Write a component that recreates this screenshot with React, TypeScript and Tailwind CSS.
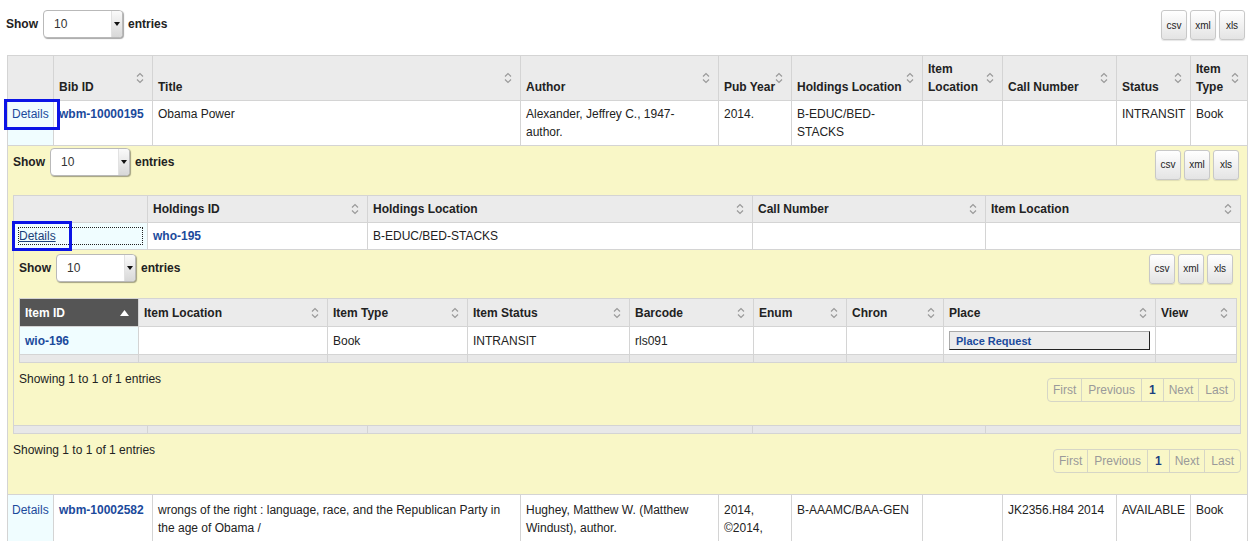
import React from "react";

const font = { fontFamily: '"Liberation Sans", Arial, Helvetica, sans-serif' };

function SortIcon() {
  return (
    <svg
      width="8"
      height="12"
      viewBox="0 0 8 12"
      className="absolute right-[8px] top-1/2 -translate-y-1/2"
      fill="none"
      stroke="#9a9a9a"
      strokeWidth="1.2"
    >
      <path d="M1 4.5 L4 1.5 L7 4.5" />
      <path d="M1 7.5 L4 10.5 L7 7.5" />
    </svg>
  );
}

function ShowSelect() {
  return (
    <div className="flex items-center gap-[5px] text-[12px] font-bold text-[#222]">
      <span>Show</span>
      <div className="flex h-[28px] w-[80px] overflow-hidden rounded-[4px] border border-[#b9b9b9] bg-white shadow-[1px_1px_1px_rgba(0,0,0,0.35)]">
        <span className="flex flex-1 items-center pl-[10px] font-normal text-[#333]">10</span>
        <span className="flex w-[11px] items-center justify-center border-l border-[#e2e2e2] bg-gradient-to-b from-[#fafafa] to-[#d8d8d8]">
          <svg width="6" height="4" viewBox="0 0 6 4">
            <path d="M0 0 L6 0 L3 4 Z" fill="#111" />
          </svg>
        </span>
      </div>
      <span>entries</span>
    </div>
  );
}

function ExportButtons() {
  return (
    <div className="flex gap-[3px]">
      {["csv", "xml", "xls"].map((b) => (
        <div
          key={b}
          className="flex h-[30px] w-[26px] items-center justify-center rounded-[3px] border border-[#c8c8c8] bg-gradient-to-b from-white to-[#e4e4e4] text-[10px] text-[#222] shadow-[0_1px_1px_rgba(0,0,0,0.1)]"
        >
          {b}
        </div>
      ))}
    </div>
  );
}

function Pager() {
  return (
    <div className="flex h-[24px] overflow-hidden rounded-[4px] border border-[#d6d6c6] text-[12px] text-[#9a9a9a]">
      <span className="flex items-center px-[5px]">First</span>
      <span className="flex items-center border-l border-[#d6d6c6] px-[6px]">Previous</span>
      <span className="flex items-center border-l border-[#d6d6c6] px-[7px] font-bold text-[#1b3f7f]">1</span>
      <span className="flex items-center border-l border-[#d6d6c6] px-[5px]">Next</span>
      <span className="flex items-center border-l border-[#d6d6c6] px-[6px]">Last</span>
    </div>
  );
}

function Th({
  children,
  dark,
  noSort,
  tight,
}: {
  children?: React.ReactNode;
  dark?: boolean;
  noSort?: boolean;
  tight?: boolean;
}) {
  return (
    <th
      className={
        "relative border border-[#d4d4d4] py-[4px] pl-[5px] text-left align-bottom text-[12px] font-bold leading-[18px] " +
        (tight ? "whitespace-nowrap pr-[2px] " : "pr-[18px] ") +
        (dark ? "bg-[#555555] text-white" : "bg-[#ebebeb] text-[#222]")
      }
    >
      {children}
      {dark ? (
        <svg width="9" height="6" viewBox="0 0 9 6" className="absolute right-[9px] top-1/2 -translate-y-1/2">
          <path d="M0 6 L4.5 0 L9 6 Z" fill="#fff" />
        </svg>
      ) : noSort ? null : (
        <SortIcon />
      )}
    </th>
  );
}

function Td({
  children,
  link,
  mid,
  cls = "",
}: {
  children?: React.ReactNode;
  link?: boolean;
  mid?: boolean;
  cls?: string;
}) {
  return (
    <td
      className={
        "border border-[#d4d4d4] px-[5px] text-[12px] " +
        (mid ? "align-middle " : "align-top ") +
        (link ? "font-bold text-[#1b4a9c] " : "text-[#222] ") +
        cls
      }
    >
      {children}
    </td>
  );
}

function Strip({ cols }: { cols: number }) {
  return (
    <tr>
      {Array.from({ length: cols }).map((_, i) => (
        <td key={i} className="h-[8px] border border-[#d4d4d4] bg-[#e8e8e8] p-0" />
      ))}
    </tr>
  );
}

function Footer({ mb }: { mb: string }) {
  return (
    <div className={"flex items-start justify-between " + mb}>
      <span className="mt-[7px] text-[12px] leading-[18px] text-[#222]">Showing 1 to 1 of 1 entries</span>
      <div className="mt-[15px]">
        <Pager />
      </div>
    </div>
  );
}

function ItemsPanel() {
  return (
    <div className="px-[5px] pt-[4px]">
      <div className="flex items-start justify-between pr-[2px]">
        <ShowSelect />
        <ExportButtons />
      </div>
      <table className="mt-[14px] w-[1217px] table-fixed border-collapse">
        <colgroup>
          <col className="w-[119px]" />
          <col className="w-[189px]" />
          <col className="w-[140px]" />
          <col className="w-[162px]" />
          <col className="w-[124px]" />
          <col className="w-[93px]" />
          <col className="w-[97px]" />
          <col className="w-[212px]" />
          <col className="w-[81px]" />
        </colgroup>
        <thead>
          <tr className="h-[28px]">
            <Th dark>Item ID</Th>
            <Th>Item Location</Th>
            <Th>Item Type</Th>
            <Th>Item Status</Th>
            <Th>Barcode</Th>
            <Th>Enum</Th>
            <Th>Chron</Th>
            <Th>Place</Th>
            <Th>View</Th>
          </tr>
        </thead>
        <tbody>
          <tr className="h-[28px] bg-white">
            <Td mid link cls="bg-[#f0fdff]">
              wio-196
            </Td>
            <Td mid />
            <Td mid>Book</Td>
            <Td mid>INTRANSIT</Td>
            <Td mid>rls091</Td>
            <Td mid />
            <Td mid />
            <Td mid>
              <div className="flex h-[19px] w-[201px] items-center border border-[#aaa] border-b-[#222] border-r-[#222] bg-[#ececec] pl-[6px] text-[11px] font-bold text-[#1b4a9c]">
                Place Request
              </div>
            </Td>
            <Td mid />
          </tr>
          <Strip cols={9} />
        </tbody>
      </table>
      <Footer mb="pb-[23px]" />
    </div>
  );
}

function HoldingsPanel() {
  return (
    <div className="pl-[5px] pr-[6px] pt-[2px]">
      <div className="flex items-start justify-between pr-[2px]">
        <ShowSelect />
        <div className="mt-[2px]">
          <ExportButtons />
        </div>
      </div>
      <table className="mt-[15px] w-[1227px] table-fixed border-collapse">
        <colgroup>
          <col className="w-[134px]" />
          <col className="w-[220px]" />
          <col className="w-[385px]" />
          <col className="w-[233px]" />
          <col className="w-[255px]" />
        </colgroup>
        <thead>
          <tr className="h-[27px]">
            <Th noSort />
            <Th>Holdings ID</Th>
            <Th>Holdings Location</Th>
            <Th>Call Number</Th>
            <Th>Item Location</Th>
          </tr>
        </thead>
        <tbody>
          <tr className="h-[27px] bg-white">
            <td className="relative border border-[#d4d4d4] bg-[#f0fdff] px-[5px] align-middle text-[12px]">
              <span className="block leading-[16px] text-[#1a3f7a] underline outline-1 outline-dotted outline-[#222]">
                Details
              </span>
              <span className="absolute left-[-2px] top-[-2px] h-[30px] w-[60px] border-[3px] border-[#0b14e6]" />
            </td>
            <Td mid link>
              who-195
            </Td>
            <Td mid>B-EDUC/BED-STACKS</Td>
            <Td mid />
            <Td mid />
          </tr>
          <tr>
            <td colSpan={5} className="border border-[#d4d4d4] bg-[#f9f7c7] p-0">
              <ItemsPanel />
            </td>
          </tr>
          <Strip cols={5} />
        </tbody>
      </table>
      <Footer mb="pb-[21px]" />
    </div>
  );
}

export default function App() {
  return (
    <div style={font} className="min-h-screen bg-white px-[6px] pt-[10px] text-[#222]">
      <div className="flex items-start justify-between pr-[2px]">
        <ShowSelect />
        <ExportButtons />
      </div>
      <table className="ml-[1px] mt-[15px] w-[1240px] table-fixed border-collapse">
        <colgroup>
          <col className="w-[46px]" />
          <col className="w-[99px]" />
          <col className="w-[368px]" />
          <col className="w-[198px]" />
          <col className="w-[73px]" />
          <col className="w-[131px]" />
          <col className="w-[80px]" />
          <col className="w-[114px]" />
          <col className="w-[74px]" />
          <col className="w-[57px]" />
        </colgroup>
        <thead>
          <tr className="h-[45px]">
            <Th noSort />
            <Th>Bib ID</Th>
            <Th>Title</Th>
            <Th>Author</Th>
            <Th tight>Pub Year</Th>
            <Th>Holdings Location</Th>
            <Th>Item Location</Th>
            <Th>Call Number</Th>
            <Th>Status</Th>
            <Th>Item Type</Th>
          </tr>
        </thead>
        <tbody className="leading-[18px]">
          <tr className="h-[45px] bg-white">
            <td className="relative border border-[#d4d4d4] bg-[#f0fdff] px-[4px] py-[4px] align-top text-[12px] text-[#1b4a9c]">
              Details
              <span className="absolute left-[-4px] top-[-2px] h-[31px] w-[56px] border-[3px] border-[#0b14e6]" />
            </td>
            <Td link cls="py-[4px]">
              wbm-10000195
            </Td>
            <Td cls="py-[4px]">Obama Power</Td>
            <Td cls="py-[4px]">Alexander, Jeffrey C., 1947- author.</Td>
            <Td cls="py-[4px]">2014.</Td>
            <Td cls="py-[4px]">B-EDUC/BED-STACKS</Td>
            <Td cls="py-[4px]" />
            <Td cls="py-[4px]" />
            <Td cls="py-[4px]">INTRANSIT</Td>
            <Td cls="py-[4px]">Book</Td>
          </tr>
          <tr>
            <td colSpan={10} className="border border-[#d4d4d4] bg-[#f9f7c7] p-0">
              <HoldingsPanel />
            </td>
          </tr>
          <tr className="h-[48px] bg-white">
            <td className="border border-[#d4d4d4] bg-[#f0fdff] px-[4px] py-[6px] align-top text-[12px] text-[#1b4a9c]">
              Details
            </td>
            <Td link cls="py-[6px]">
              wbm-10002582
            </Td>
            <Td cls="py-[6px]">wrongs of the right : language, race, and the Republican Party in the age of Obama /</Td>
            <Td cls="py-[6px]">Hughey, Matthew W. (Matthew Windust), author.</Td>
            <Td cls="py-[6px]">2014, ©2014,</Td>
            <Td cls="py-[6px]">B-AAAMC/BAA-GEN</Td>
            <Td cls="py-[6px]" />
            <Td cls="py-[6px]">JK2356.H84 2014</Td>
            <Td cls="py-[6px]">AVAILABLE</Td>
            <Td cls="py-[6px]">Book</Td>
          </tr>
        </tbody>
      </table>
    </div>
  );
}
